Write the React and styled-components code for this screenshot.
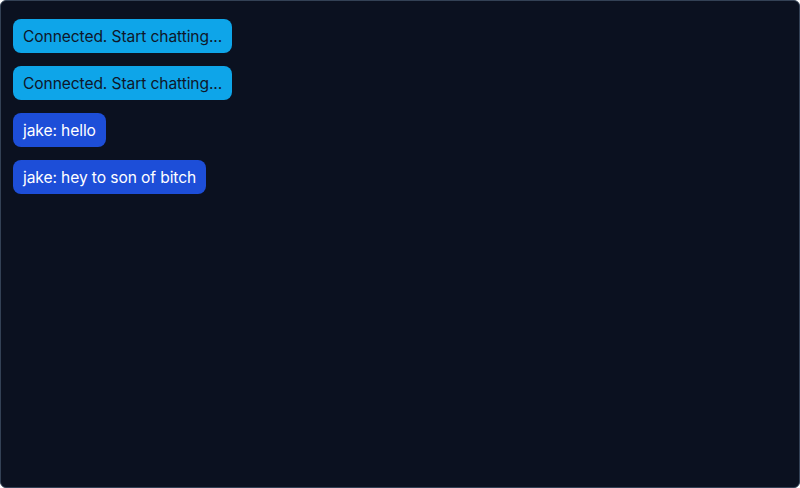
import React from "react";
import styled, { createGlobalStyle } from "styled-components";

const GlobalStyle = createGlobalStyle`
  html, body {
    margin: 0;
    padding: 0;
    background: #ffffff;
  }
  * {
    box-sizing: border-box;
  }
`;

const messages = [
  { kind: "system", text: "Connected. Start chatting..." },
  { kind: "system", text: "Connected. Start chatting..." },
  { kind: "user", text: "jake: hello" },
  { kind: "user", text: "jake: hey to son of bitch" },
];

function App() {
  return (
    <>
      <GlobalStyle />
      <ChatWindow>
        {messages.map((m, i) => (
          <Bubble key={i} $kind={m.kind}>
            {m.text}
          </Bubble>
        ))}
      </ChatWindow>
    </>
  );
}

export default App;

const ChatWindow = styled.div`
  width: 800px;
  height: 488px;
  display: flex;
  flex-direction: column;
  align-items: flex-start;
  gap: 13px;
  padding: 18px 12px;
  background: #0b1120;
  border: 1px solid #334155;
  border-radius: 6px;
  overflow-y: auto;
  font-family: Inter, "Noto Sans", sans-serif;
`;

const Bubble = styled.div`
  padding: 6px 10px 4px;
  border-radius: 8px;
  font-size: 15.6px;
  letter-spacing: -0.1px;
  line-height: 24px;
  background: ${(p) => (p.$kind === "system" ? "#0ea5e9" : "#1d4ed8")};
  color: ${(p) => (p.$kind === "system" ? "#0f172a" : "#ffffff")};
`;
